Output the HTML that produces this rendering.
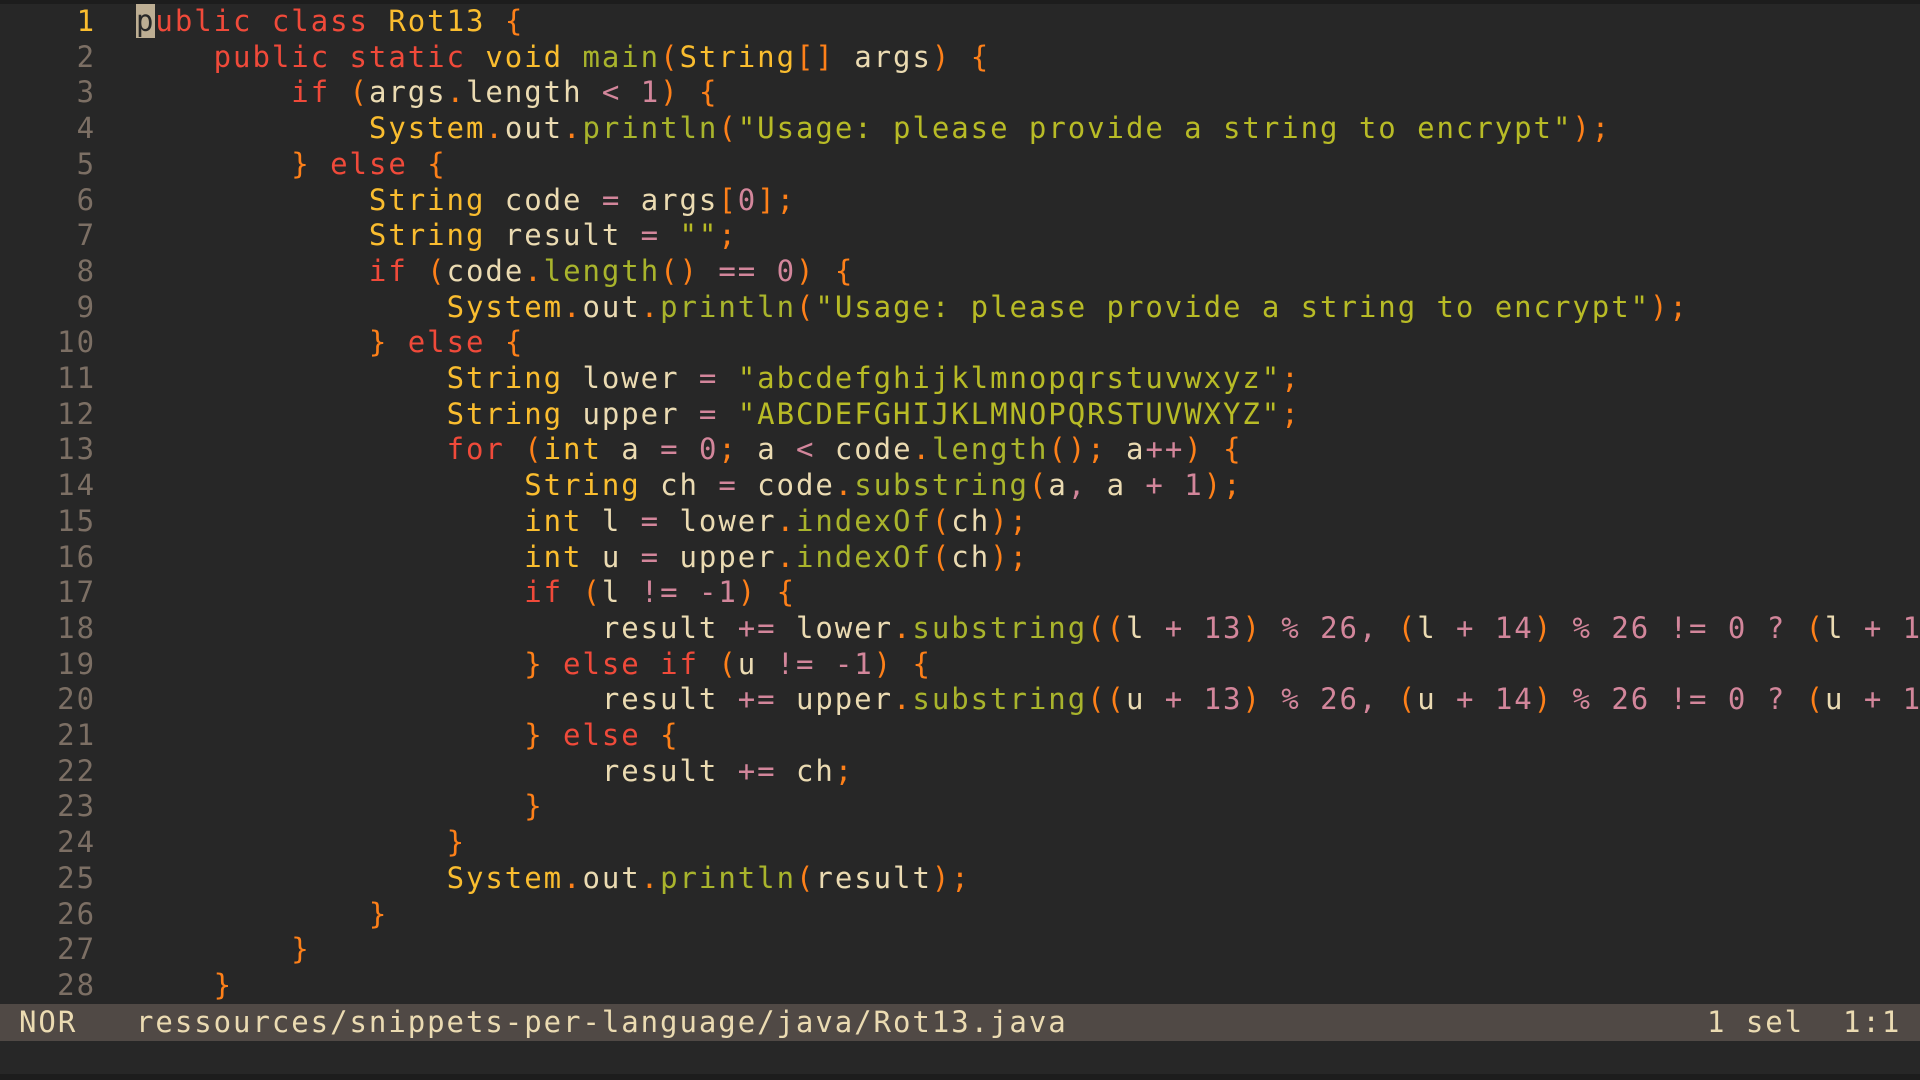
<!DOCTYPE html>
<html><head><meta charset="utf-8"><style>
html,body{margin:0;padding:0;width:1920px;height:1080px;overflow:hidden;background:#1d1d1d}
#ed{position:absolute;left:0;top:4px;width:1920px;height:1000px;background:#272727;overflow:hidden}
#top{position:absolute;left:0;top:0;width:1920px;height:4px;background:#1d1d1d}
.l{position:absolute;left:0;height:35.7px;line-height:35.7px;white-space:pre;font-family:"DejaVu Sans Mono","Liberation Mono",monospace;font-size:29px;letter-spacing:1.95px;color:#ebdbb2}
.n{position:absolute;left:0;width:96px;text-align:right;color:#7c6f64}
.x{position:absolute;left:136px}
.k{color:#f04a3a}.t{color:#fabd2f}.p{color:#fe8019}.s{color:#b8bb26}.f{color:#a9b42c}.o{color:#d3869b}
.cur{background:#bdae93;color:#282828}
#st{position:absolute;left:0;top:1004px;width:1920px;height:37px;background:#504945;line-height:37px;white-space:pre;font-family:"DejaVu Sans Mono","Liberation Mono",monospace;font-size:29px;letter-spacing:1.95px;color:#ebdbb2}
#bl{position:absolute;left:0;top:1041px;width:1920px;height:33px;background:#272727}
</style></head><body>
<div id="top"></div>
<div id="ed">
<div class="l" style="top:0px"><span class="n" style="color:#fabd2f">1</span><span class="x"><span class="cur">p</span><span class="k">ublic class</span> <span class="t">Rot13</span> <span class="p">{</span></span></div>
<div class="l" style="top:35.7px"><span class="n">2</span><span class="x">    <span class="k">public static</span> <span class="t">void</span> <span class="f">main</span><span class="p">(</span><span class="t">String</span><span class="p">[]</span> args<span class="p">)</span> <span class="p">{</span></span></div>
<div class="l" style="top:71.4px"><span class="n">3</span><span class="x">        <span class="k">if</span> <span class="p">(</span>args<span class="p">.</span>length <span class="o">&lt;</span> <span class="o">1</span><span class="p">)</span> <span class="p">{</span></span></div>
<div class="l" style="top:107.1px"><span class="n">4</span><span class="x">            <span class="t">System</span><span class="p">.</span>out<span class="p">.</span><span class="f">println</span><span class="p">(</span><span class="s">"Usage: please provide a string to encrypt"</span><span class="p">);</span></span></div>
<div class="l" style="top:142.8px"><span class="n">5</span><span class="x">        <span class="p">}</span> <span class="k">else</span> <span class="p">{</span></span></div>
<div class="l" style="top:178.5px"><span class="n">6</span><span class="x">            <span class="t">String</span> code <span class="o">=</span> args<span class="p">[</span><span class="o">0</span><span class="p">];</span></span></div>
<div class="l" style="top:214.2px"><span class="n">7</span><span class="x">            <span class="t">String</span> result <span class="o">=</span> <span class="s">""</span><span class="p">;</span></span></div>
<div class="l" style="top:249.9px"><span class="n">8</span><span class="x">            <span class="k">if</span> <span class="p">(</span>code<span class="p">.</span><span class="f">length</span><span class="p">()</span> <span class="o">==</span> <span class="o">0</span><span class="p">)</span> <span class="p">{</span></span></div>
<div class="l" style="top:285.6px"><span class="n">9</span><span class="x">                <span class="t">System</span><span class="p">.</span>out<span class="p">.</span><span class="f">println</span><span class="p">(</span><span class="s">"Usage: please provide a string to encrypt"</span><span class="p">);</span></span></div>
<div class="l" style="top:321.3px"><span class="n">10</span><span class="x">            <span class="p">}</span> <span class="k">else</span> <span class="p">{</span></span></div>
<div class="l" style="top:357px"><span class="n">11</span><span class="x">                <span class="t">String</span> lower <span class="o">=</span> <span class="s">"abcdefghijklmnopqrstuvwxyz"</span><span class="p">;</span></span></div>
<div class="l" style="top:392.7px"><span class="n">12</span><span class="x">                <span class="t">String</span> upper <span class="o">=</span> <span class="s">"ABCDEFGHIJKLMNOPQRSTUVWXYZ"</span><span class="p">;</span></span></div>
<div class="l" style="top:428.4px"><span class="n">13</span><span class="x">                <span class="k">for</span> <span class="p">(</span><span class="t">int</span> a <span class="o">=</span> <span class="o">0</span><span class="p">;</span> a <span class="o">&lt;</span> code<span class="p">.</span><span class="f">length</span><span class="p">();</span> a<span class="o">++</span><span class="p">)</span> <span class="p">{</span></span></div>
<div class="l" style="top:464.1px"><span class="n">14</span><span class="x">                    <span class="t">String</span> ch <span class="o">=</span> code<span class="p">.</span><span class="f">substring</span><span class="p">(</span>a<span class="o">,</span> a <span class="o">+</span> <span class="o">1</span><span class="p">);</span></span></div>
<div class="l" style="top:499.8px"><span class="n">15</span><span class="x">                    <span class="t">int</span> l <span class="o">=</span> lower<span class="p">.</span><span class="f">indexOf</span><span class="p">(</span>ch<span class="p">);</span></span></div>
<div class="l" style="top:535.5px"><span class="n">16</span><span class="x">                    <span class="t">int</span> u <span class="o">=</span> upper<span class="p">.</span><span class="f">indexOf</span><span class="p">(</span>ch<span class="p">);</span></span></div>
<div class="l" style="top:571.2px"><span class="n">17</span><span class="x">                    <span class="k">if</span> <span class="p">(</span>l <span class="o">!=</span> <span class="o">-1</span><span class="p">)</span> <span class="p">{</span></span></div>
<div class="l" style="top:606.9px"><span class="n">18</span><span class="x">                        result <span class="o">+=</span> lower<span class="p">.</span><span class="f">substring</span><span class="p">((</span>l <span class="o">+</span> <span class="o">13</span><span class="p">)</span> <span class="o">%</span> <span class="o">26,</span> <span class="p">(</span>l <span class="o">+</span> <span class="o">14</span><span class="p">)</span> <span class="o">%</span> <span class="o">26</span> <span class="o">!=</span> <span class="o">0</span> <span class="o">?</span> <span class="p">(</span>l <span class="o">+</span> <span class="o">14</span><span class="p">)</span> <span class="o">%</span> <span class="o">26</span></span></div>
<div class="l" style="top:642.6px"><span class="n">19</span><span class="x">                    <span class="p">}</span> <span class="k">else if</span> <span class="p">(</span>u <span class="o">!=</span> <span class="o">-1</span><span class="p">)</span> <span class="p">{</span></span></div>
<div class="l" style="top:678.3px"><span class="n">20</span><span class="x">                        result <span class="o">+=</span> upper<span class="p">.</span><span class="f">substring</span><span class="p">((</span>u <span class="o">+</span> <span class="o">13</span><span class="p">)</span> <span class="o">%</span> <span class="o">26,</span> <span class="p">(</span>u <span class="o">+</span> <span class="o">14</span><span class="p">)</span> <span class="o">%</span> <span class="o">26</span> <span class="o">!=</span> <span class="o">0</span> <span class="o">?</span> <span class="p">(</span>u <span class="o">+</span> <span class="o">14</span><span class="p">)</span> <span class="o">%</span> <span class="o">26</span></span></div>
<div class="l" style="top:714px"><span class="n">21</span><span class="x">                    <span class="p">}</span> <span class="k">else</span> <span class="p">{</span></span></div>
<div class="l" style="top:749.7px"><span class="n">22</span><span class="x">                        result <span class="o">+=</span> ch<span class="p">;</span></span></div>
<div class="l" style="top:785.4px"><span class="n">23</span><span class="x">                    <span class="p">}</span></span></div>
<div class="l" style="top:821.1px"><span class="n">24</span><span class="x">                <span class="p">}</span></span></div>
<div class="l" style="top:856.8px"><span class="n">25</span><span class="x">                <span class="t">System</span><span class="p">.</span>out<span class="p">.</span><span class="f">println</span><span class="p">(</span>result<span class="p">);</span></span></div>
<div class="l" style="top:892.5px"><span class="n">26</span><span class="x">            <span class="p">}</span></span></div>
<div class="l" style="top:928.2px"><span class="n">27</span><span class="x">        <span class="p">}</span></span></div>
<div class="l" style="top:963.9px"><span class="n">28</span><span class="x">    <span class="p">}</span></span></div>
</div>
<div id="st"><span style="position:absolute;left:19px">NOR</span><span style="position:absolute;left:136px">ressources/snippets-per-language/java/Rot13.java</span><span style="position:absolute;left:1707px">1 sel</span><span style="position:absolute;left:1843px">1:1</span></div>
<div id="bl"></div>
</body></html>
